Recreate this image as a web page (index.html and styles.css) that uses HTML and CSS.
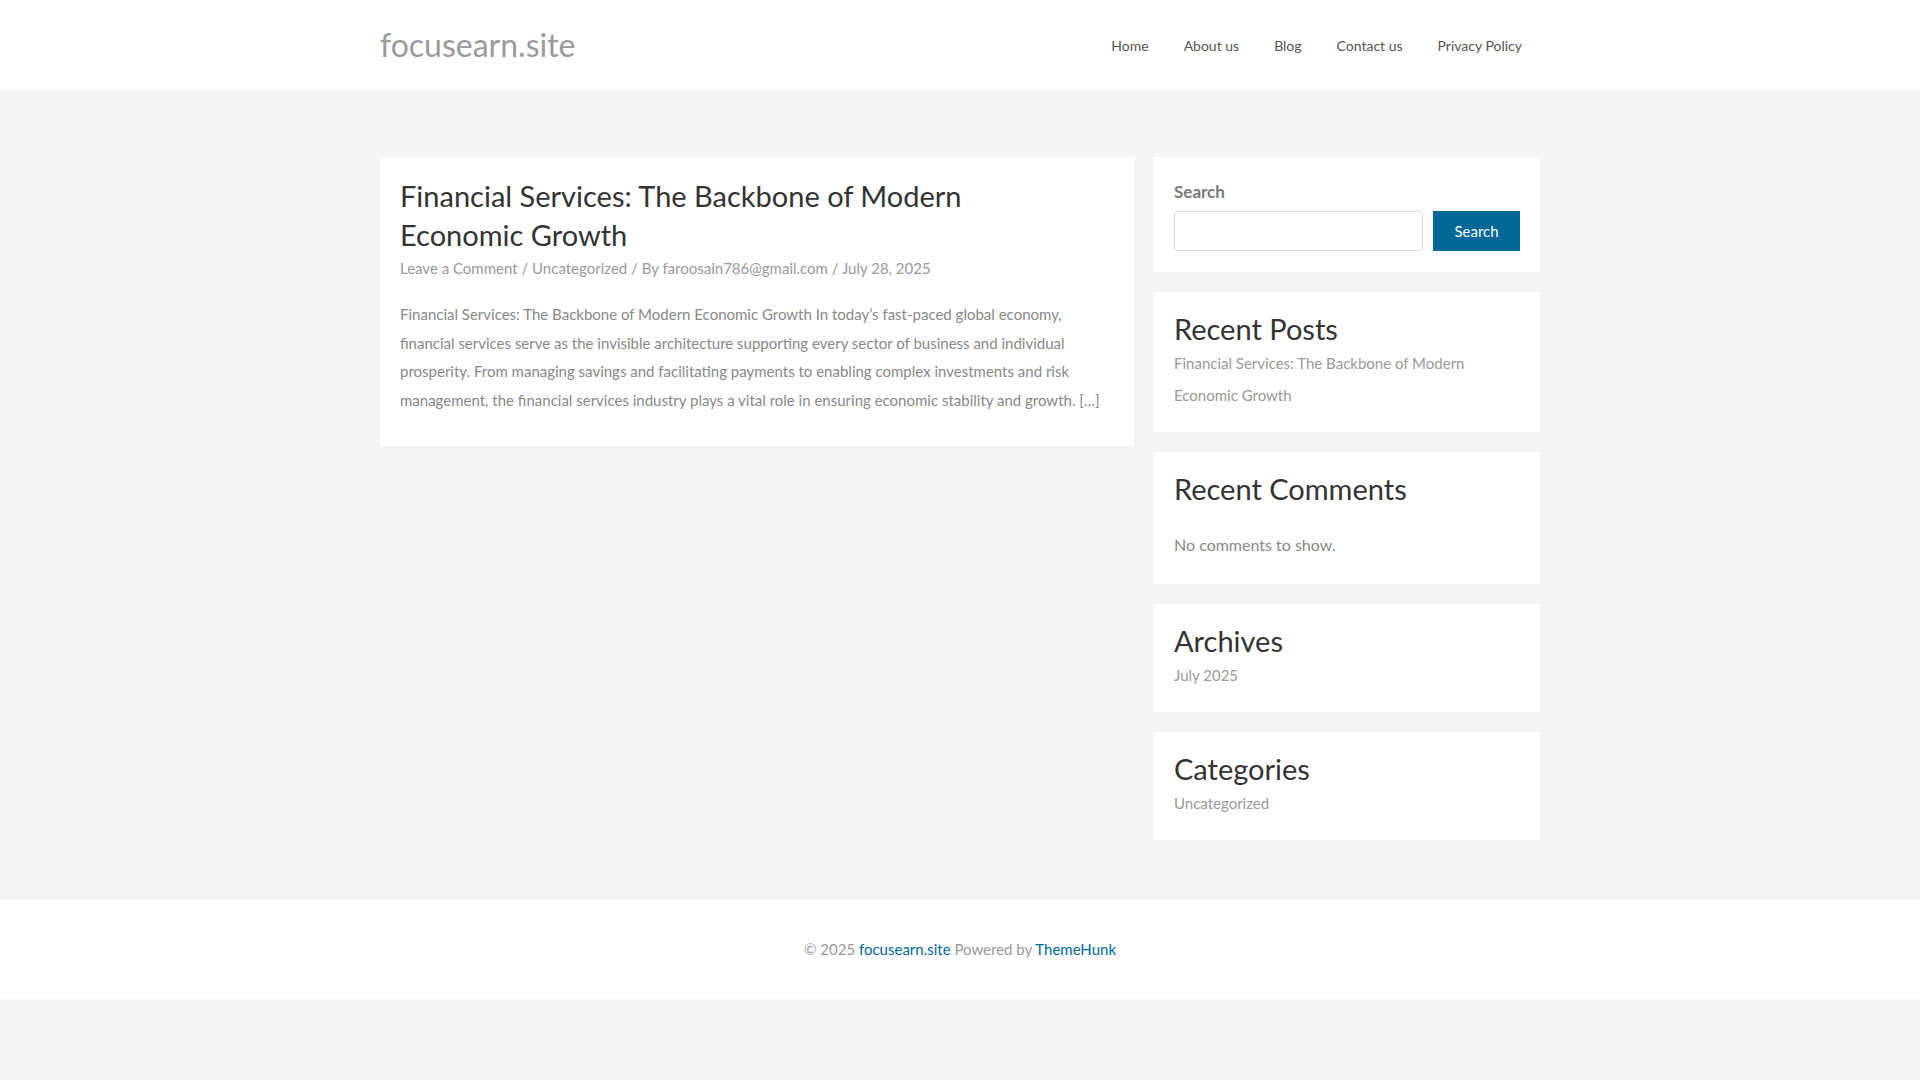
FILE: index.html
```html
<!DOCTYPE html>
<html lang="en">
<head>
<meta charset="utf-8">
<title>focusearn.site</title>
<link rel="stylesheet" href="styles.css">
</head>
<body>
<header class="site-header">
  <div class="container header-inner">
    <a class="logo" href="#">focusearn.site</a>
    <nav class="main-nav">
      <a href="#">Home</a>
      <a href="#">About us</a>
      <a href="#">Blog</a>
      <a href="#">Contact us</a>
      <a href="#">Privacy Policy</a>
    </nav>
  </div>
</header>

<main class="site-main">
  <div class="container content-row">
    <div class="primary">
      <article class="post-card">
        <h2 class="post-title">Financial Services: The Backbone of Modern Economic Growth</h2>
        <div class="post-meta">
          <a href="#">Leave a Comment</a> / <a href="#">Uncategorized</a> / By <a href="#">faroosain786@gmail.com</a> / <span>July 28, 2025</span>
        </div>
        <p class="post-excerpt">Financial Services: The Backbone of Modern Economic Growth In today’s fast-paced global economy, financial services serve as the invisible architecture supporting every sector of business and individual prosperity. From managing savings and facilitating payments to enabling complex investments and risk management, the financial services industry plays a vital role in ensuring economic stability and growth. […]</p>
      </article>
    </div>

    <aside class="sidebar">
      <section class="widget widget-search">
        <label class="search-label" for="s">Search</label>
        <div class="search-row">
          <input id="s" class="search-input" type="text">
          <button class="search-btn" type="button">Search</button>
        </div>
      </section>

      <section class="widget">
        <h2 class="widget-title">Recent Posts</h2>
        <ul class="widget-list">
          <li><a href="#">Financial Services: The Backbone of Modern Economic Growth</a></li>
        </ul>
      </section>

      <section class="widget">
        <h2 class="widget-title">Recent Comments</h2>
        <p class="no-comments">No comments to show.</p>
      </section>

      <section class="widget">
        <h2 class="widget-title">Archives</h2>
        <ul class="widget-list">
          <li><a href="#">July 2025</a></li>
        </ul>
      </section>

      <section class="widget">
        <h2 class="widget-title">Categories</h2>
        <ul class="widget-list">
          <li><a href="#">Uncategorized</a></li>
        </ul>
      </section>
    </aside>
  </div>
</main>

<footer class="site-footer">
  <div class="footer-text">© 2025 <a href="#">focusearn.site</a> Powered by <a href="#">ThemeHunk</a></div>
</footer>
</body>
</html>
```
FILE: styles.css
```css
* { box-sizing: border-box; }

html, body {
  margin: 0;
  padding: 0;
}

body {
  background: #f4f4f4;
  font-family: "Lato", "Open Sans", sans-serif;
  color: #888;
  min-height: 1080px;
}

a { text-decoration: none; color: inherit; }

.container {
  width: 1160px;
  margin: 0 auto;
}

/* Header */
.site-header {
  background: #fff;
  border-bottom: 1px solid #ececec;
  height: 92px;
}

.header-inner {
  height: 91px;
  display: flex;
  align-items: center;
  justify-content: space-between;
}

.logo {
  font-size: 32px;
  color: #9a9a9a;
  line-height: 1;
  margin-top: -2px;
}

.main-nav {
  display: flex;
  align-items: center;
}

.main-nav a {
  font-size: 14px;
  color: #555;
  padding: 0 17.5px;
  line-height: 24px;
}

.main-nav a:last-child {
  padding-right: 18px;
}

/* Main */
.site-main {
  padding: 65px 0 58px;
}

.content-row {
  display: flex;
  justify-content: space-between;
  align-items: flex-start;
}

.primary {
  width: 754px;
}

.post-card {
  background: #fff;
  padding: 19px 20px 32px;
}

.post-title {
  margin: 0;
  max-width: 620px;
  font-weight: 400;
  font-size: 29px;
  line-height: 39px;
  color: #333;
}

.post-meta {
  margin-top: 2px;
  font-size: 15px;
  line-height: 24px;
  color: #999;
}

.post-excerpt {
  margin: 20px 0 0;
  max-width: 700px;
  font-size: 15px;
  line-height: 28.5px;
  color: #888;
}

/* Sidebar */
.sidebar {
  width: 387px;
  display: flex;
  flex-direction: column;
  gap: 20px;
}

.widget {
  background: #fff;
  padding: 20px 20px 21px 21px;
}

.search-label {
  display: block;
  margin-top: 3px;
  font-size: 17px;
  font-weight: 700;
  line-height: 24px;
  color: #7a7a7a;
}

.search-row {
  display: flex;
  gap: 10px;
  margin-top: 7px;
}

.search-input {
  flex: 1;
  height: 40px;
  border: 1px solid #ddd;
  border-radius: 3px;
  background: #fff;
  font-family: inherit;
}

.search-btn {
  width: 87px;
  height: 40px;
  border: none;
  background: #006799;
  color: #fff;
  font-family: inherit;
  font-size: 15px;
  padding: 0;
}

.widget-title {
  margin: 0 0 2px;
  font-weight: 400;
  font-size: 29px;
  line-height: 1.15;
  color: #333;
}

.widget-list {
  list-style: none;
  margin: 0;
  padding: 0;
}

.widget-list li {
  font-size: 15px;
  line-height: 32px;
  color: #999;
}

.no-comments {
  margin: 25.5px 0 3.5px;
  font-size: 16px;
  line-height: 28px;
  color: #888;
}

/* Footer */
.site-footer {
  background: #fff;
  border-top: 1px solid #e8e8e8;
  height: 101px;
  display: flex;
  align-items: center;
  justify-content: center;
}

.footer-text {
  font-size: 15px;
  color: #999;
}

.footer-text a {
  color: #006799;
}
```
